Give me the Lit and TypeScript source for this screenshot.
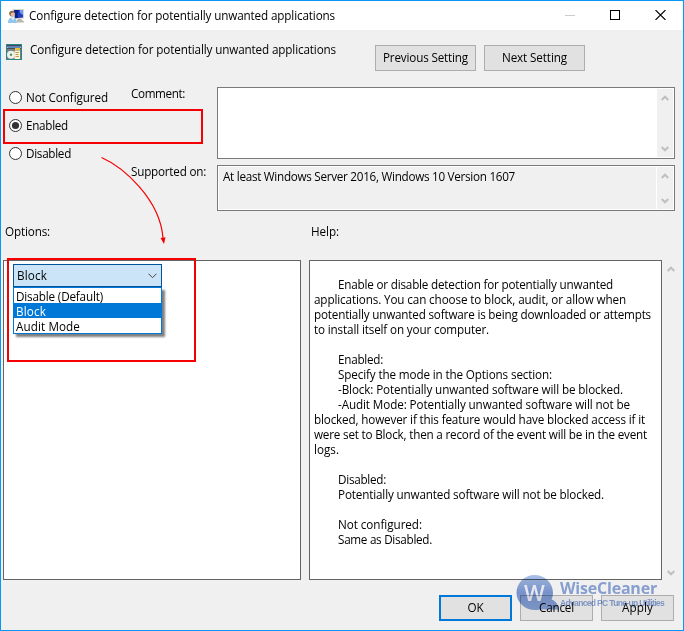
import { LitElement, html, css, svg } from "lit";
import { customElement, property } from "lit/decorators.js";

/** One line of text tracked so that it fills a given width. */
@customElement("fit-text")
class FitText extends LitElement {
  @property({ type: Number }) w = 0;
  @property() text = "";

  static styles = css`
    :host { display: inline-block; white-space: pre; }
    span { display: inline-block; }
  `;

  firstUpdated() {
    const el = this.renderRoot.querySelector("span") as HTMLElement;
    const natural = el.getBoundingClientRect().width;
    if (this.w && natural) {
      el.style.letterSpacing = `${(this.w - natural) / this.text.length}px`;
    }
  }

  render() {
    return html`<span>${this.text}</span>`;
  }
}

@customElement("scroll-gutter")
class ScrollGutter extends LitElement {
  static styles = css`
    :host { display: flex; flex-direction: column; justify-content: space-between; align-items: center; width: 16px; box-sizing: border-box; background: #f0f0f0; }
    svg { display: block; }
  `;
  render() {
    return html`
      <svg width="8" height="6" viewBox="0 0 8 6"><path d="M0.7 5L4 1.7L7.3 5" fill="none" stroke="#bfbfbf" stroke-width="2" /></svg>
      <svg width="8" height="6" viewBox="0 0 8 6"><path d="M0.7 1L4 4.3L7.3 1" fill="none" stroke="#bfbfbf" stroke-width="2" /></svg>
    `;
  }
}

const HELP: Array<[string, number, boolean]> = [
  ["", 0, false],
  ["Enable or disable detection for potentially unwanted", 275, true],
  ["applications. You can choose to block, audit, or allow when", 312, false],
  ["potentially unwanted software is being downloaded or attempts", 337, false],
  ["to install itself on your computer.", 175, false],
  ["", 0, false],
  ["Enabled:", 45, true],
  ["Specify the mode in the Options section:", 214, true],
  ["-Block: Potentially unwanted software will be blocked.", 285, true],
  ["-Audit Mode: Potentially unwanted software will not be", 292, true],
  ["blocked, however if this feature would have blocked access if it", 331, false],
  ["were set to Block, then a record of the event will be in the event", 333, false],
  ["logs.", 25, false],
  ["", 0, false],
  ["Disabled:", 48, true],
  ["Potentially unwanted software will not be blocked.", 266, true],
  ["", 0, false],
  ["Not configured:", 84, true],
  ["Same as Disabled.", 94, true],
];

const t = (text: string, w: number) => html`<fit-text .text=${text} .w=${w}></fit-text>`;

const userIcon = svg`
  <path d="M4.500 0H16V9.500L6 10.500Z" fill="#d9d6cb" />
  <path d="M6 1H15V8.500L7 9.200Z" fill="#1a3fc0" />
  <path d="M6 1H11L9.500 5L10 9H7Z" fill="#0b1f88" />
  <path d="M11.500 1H15V6L12 4Z" fill="#6f9bf4" />
  <path d="M10 10H13.500V11L15.800 12V13.500H8.500V12Z" fill="#b9b6ab" />
  <circle cx="4" cy="4.600" r="2.800" fill="#8a6a4c" />
  <circle cx="4.900" cy="5.500" r="2.100" fill="#e8bf9c" />
  <path d="M0 14C0 10.200 2 8.600 4.400 8.600C7 8.600 8.800 10.200 8.800 14Z" fill="#8fc6ea" />
  <path d="M3.200 8.600L5 11.400L6.400 9Z" fill="#eaf6ff" />`;

const policyIcon = svg`
  <rect x="0" y="0" width="16" height="16" fill="#2f8585" />
  <rect x="1" y="1" width="14" height="14" fill="#a9b3bd" />
  <rect x="1" y="1" width="14" height="1.500" fill="#39485e" />
  <rect x="2" y="2.500" width="12" height="1.500" fill="#5a87c8" />
  <rect x="1" y="4" width="14" height="1.500" fill="#4b4b52" />
  <rect x="9" y="4" width="5" height="2" fill="#f0c02c" />
  <rect x="1" y="6" width="14" height="9" fill="#727c80" />
  <circle cx="5" cy="10.800" r="4" fill="#eef0ea" />
  <circle cx="5" cy="10.800" r="1.200" fill="#5e8f72" />
  <rect x="8.500" y="6.500" width="5.500" height="8.500" fill="#fff6d0" />
  <path d="M9.500 8.500H13M9.500 10.500H12.500M9.500 12.500H13" stroke="#b3945a" stroke-width="0.9" />`;

@customElement("app-root")
class AppRoot extends LitElement {
  static styles = css`
    :host { display: block; font: 11.7px/15px "Open Sans", "Noto Sans", sans-serif; color: #000; }
    .window { position: relative; box-sizing: border-box; width: 684px; height: 631px; border: 1px solid #0a96f5; background: #f0f0f0; display: flex; flex-direction: column; overflow: hidden; }
    .titlebar { height: 29px; background: #fff; display: flex; align-items: center; padding: 0 17px 0 7px; box-sizing: border-box; flex: none; }
    .titlebar svg, .heading svg { display: block; flex: none; }
    .title { margin: -1px 0 0 5px; flex: 1; }
    .controls { display: flex; gap: 35px; align-items: center; margin-top: -1px; }
    .heading { display: flex; align-items: flex-start; height: 57px; padding: 14px 98px 0 5px; box-sizing: border-box; flex: none; }
    .heading .name { margin: -2px 0 0 8px; flex: 1; }
    .heading .nav { display: flex; gap: 8px; padding-top: 1px; }
    .btn { box-sizing: border-box; height: 26px; border: 1px solid #adadad; background: #e1e1e1; display: flex; align-items: center; justify-content: center; padding-bottom: 1px; }
    .nav .btn { width: 101px; }
    .setting { display: grid; grid-template-columns: 122px 86px 458px; grid-template-rows: 72px 46px; row-gap: 6px; padding: 0 0 0 8px; flex: none; height: 124px; }
    .radios { grid-row: 1 / 3; display: flex; flex-direction: column; gap: 14px; padding-top: 3px; }
    .radio { display: flex; height: 14px; gap: 4px; align-items: center; }
    .radio svg { display: block; }
    .caption { margin-top: -1px; }
    .box { box-sizing: border-box; border: 1px solid #7a7a7a; background: #fff; padding: 1px; display: flex; justify-content: space-between; }
    .box scroll-gutter { padding: 6px 0 5px; }
    .box.readonly { background: #f0f0f0; box-shadow: inset 0 0 0 1px #fff; padding-left: 5px; }
    .box.readonly fit-text { padding-top: 2px; }
    .box.readonly scroll-gutter { border-left: 1px solid #fff; width: 17px; }
    .labels { display: grid; grid-template-columns: 306px 1fr; padding: 13px 0 0 4px; height: 49px; box-sizing: border-box; flex: none; }
    .panels { display: flex; padding-left: 2px; height: 320px; flex: none; }
    .panel { box-sizing: border-box; height: 320px; border: 1px solid #646464; background: #fff; }
    .options { width: 298px; padding: 3px 0 0 9px; position: relative; }
    .help { width: 353px; margin-left: 8px; padding: 1px 0 0 4px; }
    .line { height: 15px; white-space: pre; }
    .line.indent { padding-left: 24px; }
    .panels scroll-gutter { height: 320px; padding: 6px 0 4px; margin-left: 1px; }
    .combo { box-sizing: border-box; width: 149px; height: 23px; border: 1px solid #005499; background: #cce4f7; display: flex; align-items: center; justify-content: space-between; padding: 0 4px 0 3px; }
    .list { position: absolute; left: 9px; top: 26px; box-sizing: border-box; width: 149px; border: 1px solid #0078d7; background: #fff; box-shadow: 3px 3px 2px rgba(0, 0, 0, .5); }
    .item { height: 15px; padding-left: 2px; line-height: 16px; }
    .item.on { background: #0078d7; color: #fff; }
    .footer { display: flex; gap: 8px; justify-content: flex-end; padding: 15px 9px 0 0; }
    .footer .btn { width: 73px; }
    .footer .ok { border: 2px solid #0078d7; }
    .mark { position: absolute; box-sizing: border-box; border: 2px solid #f50000; }
    .mark.enabled { left: 2px; top: 108px; width: 200px; height: 35px; }
    .mark.choices { left: 6px; top: 257px; width: 189px; height: 104px; }
    .arrow { position: absolute; left: 98px; top: 153px; }
    .brand { position: absolute; left: 514px; top: 573px; display: flex; mix-blend-mode: multiply; color: #8fa8dd; }
    .brand svg { display: block; }
    .names { display: flex; flex-direction: column; padding-top: 5px; margin-left: 1px; font-weight: 700; }
    .names .big { font-size: 16px; line-height: 18px; }
    .names .small { font-family: "Liberation Sans", sans-serif; font-size: 8.5px; line-height: 9px; margin-top: 2px; }
  `;

  radio(label: string, w: number, on: boolean) {
    return html`<div class="radio">
      <svg width="13" height="13" viewBox="0 0 13 13">
        <circle cx="6.5" cy="6.5" r="6" fill="#fff" stroke="#333" />
        ${on ? svg`<circle cx="6.5" cy="6.5" r="3.6" fill="#333" />` : ""}
      </svg>
      ${t(label, w)}
    </div>`;
  }

  render() {
    return html`
      <div class="window">
        <div class="titlebar">
          <svg width="16" height="14" viewBox="0 0 16 14">${userIcon}</svg>
          <div class="title">${t("Configure detection for potentially unwanted applications", 306)}</div>
          <div class="controls">
            <svg width="10" height="11" viewBox="0 0 10 11"><path d="M0 5.5H10" stroke="#ccc" /></svg>
            <svg width="10" height="10" viewBox="0 0 10 10"><rect x="0.5" y="0.5" width="9" height="9" fill="none" stroke="#000" /></svg>
            <svg width="11" height="10" viewBox="0 0 11 10"><path d="M0.5 0L10.5 10M10.5 0L0.5 10" stroke="#000" stroke-width="1.1" /></svg>
          </div>
        </div>
        <div class="heading">
          <svg width="16" height="16" viewBox="0 0 16 16">${policyIcon}</svg>
          <div class="name">${t("Configure detection for potentially unwanted applications", 306)}</div>
          <div class="nav">
            <div class="btn">${t("Previous Setting", 85)}</div>
            <div class="btn">${t("Next Setting", 65)}</div>
          </div>
        </div>
        <div class="setting">
          <div class="radios">
            ${this.radio("Not Configured", 82, false)}
            ${this.radio("Enabled", 42, true)}
            ${this.radio("Disabled", 45, false)}
          </div>
          <div class="caption">${t("Comment:", 54)}</div>
          <div class="box"><span></span><scroll-gutter></scroll-gutter></div>
          <div class="caption">${t("Supported on:", 75)}</div>
          <div class="box readonly">
            ${t("At least Windows Server 2016, Windows 10 Version 1607", 292)}
            <scroll-gutter></scroll-gutter>
          </div>
        </div>
        <div class="labels">
          ${t("Options:", 45)}
          ${t("Help:", 28)}
        </div>
        <div class="panels">
          <div class="panel options">
            <div class="combo">
              ${t("Block", 30)}
              <svg width="9" height="6" viewBox="0 0 9 6"><path d="M0.5 0.7L4.5 4.7L8.5 0.7" fill="none" stroke="#444" /></svg>
            </div>
            <div class="list">
              <div class="item">${t("Disable (Default)", 87)}</div>
              <div class="item on">${t("Block", 30)}</div>
              <div class="item">${t("Audit Mode", 64)}</div>
            </div>
          </div>
          <div class="panel help">
            ${HELP.map(([text, w, indent]) => html`<div class="line ${indent ? "indent" : ""}">${text ? t(text, w) : ""}</div>`)}
          </div>
          <scroll-gutter></scroll-gutter>
        </div>
        <div class="footer">
          <div class="btn ok">${t("OK", 16)}</div>
          <div class="btn">${t("Cancel", 35)}</div>
          <div class="btn">${t("Apply", 31)}</div>
        </div>

        <div class="mark enabled"></div>
        <div class="mark choices"></div>
        <svg class="arrow" width="70" height="92" viewBox="0 0 70 92">
          <path d="M2.5 3.5C24 13 61 45 64 84" fill="none" stroke="#f50000" stroke-width="1.2" />
          <path d="M61.500 84L66.500 83.200L65 90Z" fill="#f50000" />
        </svg>
        <div class="brand">
          <svg width="44" height="38" viewBox="0 0 44 38">
            <defs>
              <linearGradient id="orb" x1="0" y1="0" x2="0" y2="1">
                <stop offset="0" stop-color="#a9c0e8" />
                <stop offset="0.5" stop-color="#7f9cd8" />
                <stop offset="1" stop-color="#8ca9e0" />
              </linearGradient>
            </defs>
            <path d="M19.5 1C30 1 38 9 38 19C38 22 37 24.5 36.5 25.5C40 26.5 43.5 30 43.5 35.5H25C13 38.5 1.5 30 1.5 19C1.500 9 9.500 1 19.500 1Z" fill="url(#orb)" />
            <text x="19.500" y="27" text-anchor="middle" font-family="Open Sans, sans-serif" font-size="22" font-weight="600" fill="#f4f7fd">W</text>
          </svg>
          <div class="names">
            <div class="big">${t("WiseCleaner", 97)}</div>
            <div class="small">${t("Advanced PC Tune-up Utilities", 104)}</div>
          </div>
        </div>
      </div>
    `;
  }
}
